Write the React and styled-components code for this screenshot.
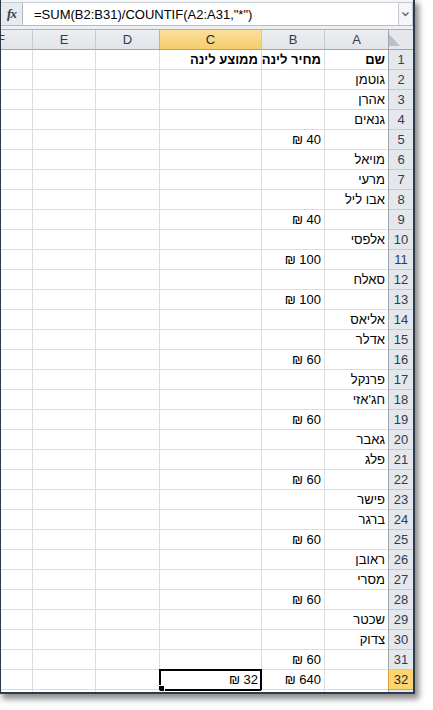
import React from "react";
import styled, { createGlobalStyle } from "styled-components";

const GlobalStyle = createGlobalStyle`
  html, body {
    margin: 0;
    padding: 0;
    background: #ffffff;
  }
  body {
    font-family: "Liberation Sans", "DejaVu Sans", Arial, sans-serif;
  }
`;

const Page = styled.div`
  width: 433px;
  height: 710px;
  background: #ffffff;
  overflow: hidden;
`;

const Window = styled.div`
  width: 412px;
  height: 692px;
  border-left: 1px solid #2d3a4a;
  border-right: 2px solid #2d3a4a;
  border-bottom: 2px solid #2d3a4a;
  box-shadow: 3px 4px 6px 1px rgba(0, 0, 0, 0.45);
  background: #ffffff;
  display: flex;
  flex-direction: column;
  overflow: hidden;
`;

const FormulaBar = styled.div`
  height: 25px;
  display: flex;
  background: #f3f4f6;
  box-sizing: border-box;
  padding-top: 2px;
`;

const FxBox = styled.div`
  width: 22px;
  display: flex;
  align-items: center;
  justify-content: center;
  background: #e7eaee;
  border-top: 1px solid #c9ced5;
  border-right: 1px solid #b3bac3;
  box-sizing: border-box;
  font-family: "Liberation Serif", "DejaVu Serif", serif;
  font-style: italic;
  font-weight: bold;
  font-size: 13px;
  color: #3a3f46;
  letter-spacing: -1px;
`;

const FormulaInput = styled.div`
  flex: 1;
  display: flex;
  align-items: center;
  padding-left: 11px;
  background: #ffffff;
  border-top: 1px solid #c9ced5;
  font-size: 13px;
  color: #000000;
  white-space: nowrap;
`;

const DropButton = styled.div`
  width: 15px;
  display: flex;
  align-items: center;
  justify-content: center;
  background: #f4f6f8;
  border: 1px solid #c3c9d0;
  border-bottom: none;
  box-sizing: border-box;
`;

const Splitter = styled.div`
  height: 5px;
  box-sizing: border-box;
  background: #eef0f3;
  border-top: 1px solid #b5bbc3;
  border-bottom: 1px solid #a9b0b8;
`;

const Sheet = styled.div`
  flex: 1;
  overflow: hidden;
  direction: rtl;
`;

const Grid = styled.div`
  display: grid;
  grid-template-columns: 25px 64px 63px 102px 64px 63px 63px;
  grid-auto-rows: 20px;
  width: max-content;
`;

const HeaderCell = styled.div`
  box-sizing: border-box;
  display: flex;
  align-items: center;
  justify-content: center;
  font-size: 13px;
  color: ${(p) => (p.$selected ? "#1d2a3a" : "#2f3d52")};
  background: ${(p) =>
    p.$selected
      ? "linear-gradient(#fbdf9c, #f6cd6c)"
      : "linear-gradient(#eceef1, #e1e4e8)"};
  border-left: 1px solid ${(p) => (p.$selected ? "#e2b04c" : "#c5cad0")};
  border-bottom: 1px solid ${(p) => (p.$selected ? "#d99c2b" : "#9ea5ad")};
`;

const Corner = styled.div`
  box-sizing: border-box;
  background: #e4e7eb;
  border-left: 1px solid #9ea5ad;
  border-bottom: 1px solid #9ea5ad;
  display: flex;
  align-items: flex-end;
  justify-content: flex-end;
  padding: 0 6px 3px 0;
`;

const RowHeader = styled.div`
  box-sizing: border-box;
  display: flex;
  align-items: center;
  justify-content: center;
  font-size: 13px;
  color: ${(p) => (p.$selected ? "#1d2a3a" : "#2f3d52")};
  background: ${(p) => (p.$selected ? "#fbd66f" : "#e4e8ed")};
  border-left: 1px solid ${(p) => (p.$selected ? "#dfa23a" : "#9ea5ad")};
  border-bottom: 1px solid ${(p) => (p.$selected ? "#dfa23a" : "#c6cbd1")};
`;

const Cell = styled.div`
  position: relative;
  box-sizing: border-box;
  display: flex;
  align-items: flex-end;
  padding: 0 3px 2px 2px;
  font-size: 13px;
  font-weight: ${(p) => (p.$bold ? "bold" : "normal")};
  color: #000000;
  white-space: nowrap;
  border-left: 1px solid #dadcdd;
  border-bottom: 1px solid #dadcdd;
`;

const Selection = styled.div`
  position: absolute;
  top: -1px;
  left: -1px;
  right: -1px;
  bottom: -2px;
  border: 2px solid #000000;
  pointer-events: none;
`;

const FillHandle = styled.div`
  position: absolute;
  left: -3px;
  bottom: -3px;
  width: 5px;
  height: 5px;
  background: #000000;
  border: 1px solid #ffffff;
`;

const columns = ["A", "B", "C", "D", "E", "F"];

const data = [
  ["שם", "מחיר לינה", "ממוצע לינה"],
  ["גוטמן"],
  ["אהרן"],
  ["גנאים"],
  ["", "40 ₪"],
  ["מויאל"],
  ["מרעי"],
  ["אבו ליל"],
  ["", "40 ₪"],
  ["אלפסי"],
  ["", "100 ₪"],
  ["סאלח"],
  ["", "100 ₪"],
  ["אליאס"],
  ["אדלר"],
  ["", "60 ₪"],
  ["פרנקל"],
  ["חג'אזי"],
  ["", "60 ₪"],
  ["גאבר"],
  ["פלג"],
  ["", "60 ₪"],
  ["פישר"],
  ["ברגר"],
  ["", "60 ₪"],
  ["ראובן"],
  ["מסרי"],
  ["", "60 ₪"],
  ["שכטר"],
  ["צדוק"],
  ["", "60 ₪"],
  ["", "640 ₪", "32 ₪"],
];

const selectedRow = 32;
const selectedCol = 2;

const App = () => {
  return (
    <Page>
      <GlobalStyle />
      <Window>
        <FormulaBar>
          <FxBox>fx</FxBox>
          <FormulaInput>=SUM(B2:B31)/COUNTIF(A2:A31,"*")</FormulaInput>
          <DropButton>
            <svg width="7" height="5" viewBox="0 0 7 5">
              <path d="M0.5 0.5 L3.5 3.5 L6.5 0.5" fill="none" stroke="#5a6470" strokeWidth="1.4" />
            </svg>
          </DropButton>
        </FormulaBar>
        <Splitter />
        <Sheet>
          <Grid>
            <Corner>
              <svg width="11" height="12" viewBox="0 0 11 12">
                <polygon points="0,0 0,12 11,12" fill="#b9c0c9" />
              </svg>
            </Corner>
            {columns.map((c, i) => (
              <HeaderCell key={c} $selected={i === selectedCol}>
                {c}
              </HeaderCell>
            ))}
            {data.map((row, r) => {
              const n = r + 1;
              return (
                <React.Fragment key={n}>
                  <RowHeader $selected={n === selectedRow}>{n}</RowHeader>
                  {columns.map((c, i) => (
                    <Cell key={c} $bold={n === 1}>
                      {row[i] || ""}
                      {n === selectedRow && i === selectedCol && (
                        <Selection>
                          <FillHandle />
                        </Selection>
                      )}
                    </Cell>
                  ))}
                </React.Fragment>
              );
            })}
            {/* sliver of the next row under the last visible one */}
            <RowHeader />
            {columns.map((c) => (
              <Cell key={c} />
            ))}
          </Grid>
        </Sheet>
      </Window>
    </Page>
  );
};

export default App;
